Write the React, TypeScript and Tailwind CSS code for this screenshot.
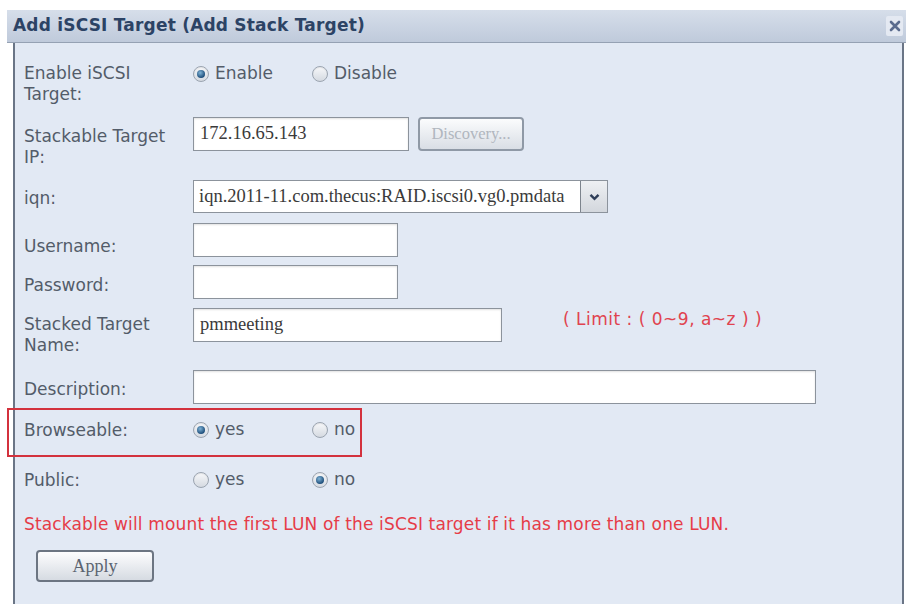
import React from 'react';

const Radio = ({ checked }: { checked?: boolean }) => (
  <span className="inline-flex h-[16px] w-[16px] shrink-0 items-center justify-center rounded-full border border-[#9ba4b0] bg-gradient-to-b from-[#f7f8fa] to-[#d5dae1] shadow-[inset_0_1px_1px_rgba(0,0,0,0.08)]">
    {checked && (
      <span className="h-[8px] w-[8px] rounded-full bg-[radial-gradient(circle_at_40%_35%,#7fb3d6,#1f4f7c_70%)]" />
    )}
  </span>
);

const Option = ({ label, checked, width }: { label: string; checked?: boolean; width?: string }) => (
  <label className={`flex items-center gap-[6px] ${width ?? ''}`}>
    <Radio checked={checked} />
    <span>{label}</span>
  </label>
);

const TextBox = ({ value, width }: { value?: string; width: string }) => (
  <div
    className={`flex h-[34px] items-center border border-[#8c939c] bg-white px-[6px] font-['Liberation_Serif',serif] text-[18.5px] text-[#3a3a3a] shadow-[inset_0_1px_2px_rgba(0,0,0,0.12)] ${width}`}
  >
    {value}
  </div>
);

const Label = ({ children, pt }: { children: React.ReactNode; pt?: string }) => (
  <div className={`w-[169px] shrink-0 leading-[21px] ${pt ?? ''}`}>{children}</div>
);

export default function App() {
  return (
    <div className="h-[604px] w-[912px] overflow-hidden bg-white pt-[10px] font-['DejaVu_Sans',sans-serif] text-[17px] text-[#535c69]">
      <div className="ml-[7px] w-[899px]">
        {/* title bar */}
        <div className="flex h-[33px] items-center justify-between border-b border-[#95a1b3] bg-gradient-to-b from-[#d6deea] to-[#bfcadb] pl-[6px] pr-[3px]">
          <span className="text-[17px] font-bold tracking-[0.2px] text-[#2c4365]">Add iSCSI Target (Add Stack Target)</span>
          <button className="flex h-[20px] w-[17px] items-center justify-center rounded-[2px] bg-[#e4e9f2]">
            <svg width="12" height="12" viewBox="0 0 12 12">
              <path d="M2 2 L10 10 M10 2 L2 10" stroke="#5a6b8e" strokeWidth="2.6" strokeLinecap="round" />
            </svg>
          </button>
        </div>

        {/* body */}
        <div className="ml-[6px] mr-[2px] flex h-[561px] flex-col border-x-2 border-[#6a7586] bg-[#e2e9f4] pl-[9px] pt-[20px]">
          <div className="flex items-start">
            <Label>
              Enable iSCSI
              <br />
              Target:
            </Label>
            <div className="flex h-[21px] items-center">
              <Option label="Enable" checked width="w-[119px]" />
              <Option label="Disable" />
            </div>
          </div>

          <div className="mt-[12px] flex items-start">
            <Label pt="pt-[9px]">
              Stackable Target
              <br />
              IP:
            </Label>
            <TextBox value="172.16.65.143" width="w-[216px]" />
            <button className="ml-[9px] flex h-[34px] w-[106px] items-center justify-center rounded-[4px] border-2 border-[#8f99a6] bg-gradient-to-b from-[#fbfcfd] to-[#d9dee5] font-['Liberation_Serif',serif] text-[16.5px] text-[#b0b6be]">
              Discovery...
            </button>
          </div>

          <div className="mt-[12px] flex items-center">
            <Label pt="pt-[4px]">iqn:</Label>
            <div className="flex h-[33px] w-[415px] border border-[#8c939c] bg-white">
              <div className="flex flex-1 items-center overflow-hidden whitespace-nowrap px-[5px] font-['Liberation_Serif',serif] text-[18.5px] text-[#3a3a3a]">
                iqn.2011-11.com.thecus:RAID.iscsi0.vg0.pmdata
              </div>
              <div className="flex w-[27px] shrink-0 items-center justify-center border-l border-[#7d848d] bg-gradient-to-b from-[#eef0f3] to-[#d3d7dd]">
                <svg width="11" height="8" viewBox="0 0 11 8">
                  <path d="M1.5 1.8 L5.5 5.8 L9.5 1.8" fill="none" stroke="#2f3e58" strokeWidth="2.4" />
                </svg>
              </div>
            </div>
          </div>

          <div className="mt-[10px] flex items-center">
            <Label pt="pt-[12px]">Username:</Label>
            <TextBox width="w-[205px]" />
          </div>

          <div className="mt-[8px] flex items-center">
            <Label pt="pt-[6px]">Password:</Label>
            <TextBox width="w-[205px]" />
          </div>

          <div className="mt-[9px] flex items-start">
            <Label pt="pt-[6px]">
              Stacked Target
              <br />
              Name:
            </Label>
            <TextBox value="pmmeeting" width="w-[309px]" />
            <span className="ml-[61px] mt-[1px] tracking-[0.5px] leading-[21px] text-[#e0434f]">( Limit : ( 0~9, a~z ) )</span>
          </div>

          <div className="mt-[14px] flex items-center">
            <Label pt="pt-[4px]">Description:</Label>
            <TextBox width="w-[623px]" />
          </div>

          <div className="relative mt-[4px] flex h-[44px] items-center">
            <div className="absolute -left-[17px] top-0 h-[49px] w-[355px] border-2 border-[#d3313d]" />
            <Label>Browseable:</Label>
            <Option label="yes" checked width="w-[119px]" />
            <Option label="no" />
          </div>

          <div className="mt-[6px] flex h-[44px] items-center">
            <Label>Public:</Label>
            <Option label="yes" width="w-[119px]" />
            <Option label="no" checked />
          </div>

          <div className="mt-[12px] whitespace-nowrap tracking-[0.15px] leading-[21px] text-[#e63c48]">
            Stackable will mount the first LUN of the iSCSI target if it has more than one LUN.
          </div>

          <button className="ml-[12px] mt-[15px] flex h-[32px] w-[118px] items-center justify-center rounded-[4px] border-2 border-[#6c7582] bg-gradient-to-b from-[#fdfdfe] to-[#d6dbe2] font-['Liberation_Serif',serif] text-[18px] text-[#5b6470]">
            Apply
          </button>
        </div>
      </div>
    </div>
  );
}
